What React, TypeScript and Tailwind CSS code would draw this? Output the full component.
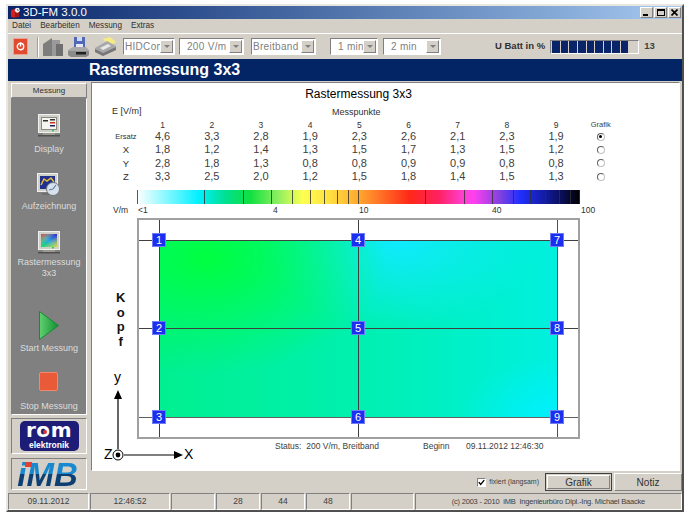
const sans = "font-['Liberation_Sans',Arial,sans-serif]"
const raised = "border border-t-white border-l-white border-r-[#808080] border-b-[#808080]"
const sunken = "border border-t-[#808080] border-l-[#808080] border-r-white border-b-white"

const columns = [1, 2, 3, 4, 5, 6, 7, 8, 9]
const rows = [
  { label: "Ersatz", small: true, values: ["4,6", "3,3", "2,8", "1,9", "2,3", "2,6", "2,1", "2,3", "1,9"], checked: true },
  { label: "X", values: ["1,8", "1,2", "1,4", "1,3", "1,5", "1,7", "1,3", "1,5", "1,2"] },
  { label: "Y", values: ["2,8", "1,8", "1,3", "0,8", "0,8", "0,9", "0,9", "0,8", "0,8"] },
  { label: "Z", values: ["3,3", "2,5", "2,0", "1,2", "1,5", "1,8", "1,4", "1,5", "1,3"] },
]

// tick positions on the colour scale, measured from its left edge
const ticks = [0, 67, 106, 134, 155, 173, 187, 200, 211, 221, 288, 327, 355, 376, 393, 408, 422, 433, 442]
const scaleLabels = [
  { text: "<1", x: 0 },
  { text: "4", x: 135 },
  { text: "10", x: 221 },
  { text: "40", x: 354 },
  { text: "100", x: 443 },
]
const markers = [
  { n: 1, x: 22, y: 22 },
  { n: 2, x: 22, y: 110 },
  { n: 3, x: 22, y: 199 },
  { n: 4, x: 221, y: 22 },
  { n: 5, x: 221, y: 110 },
  { n: 6, x: 221, y: 199 },
  { n: 7, x: 420, y: 22 },
  { n: 8, x: 420, y: 110 },
  { n: 9, x: 420, y: 199 },
]

function Combo({ label, width, clip }: { label: string; width: string; clip?: boolean }) {
  return (
    <div className={`${width} h-[17px] bg-white ${sunken} flex items-center justify-between pr-px shrink-0`}>
      <span className={`text-[10px] text-[#808080] tracking-[0.3px] overflow-hidden whitespace-nowrap ${clip ? "pl-px" : "pl-[7px]"}`}>{label}</span>
      <span className={`w-[13px] h-[13px] shrink-0 bg-[#d4d0c8] ${raised} flex items-center justify-center`}>
        <span className="w-0 h-0 border-x-[3px] border-x-transparent border-t-[3px] border-t-[#808080]" />
      </span>
    </div>
  )
}

function WinButton({ children }: { children: React.ReactNode }) {
  return (
    <div className={`w-[13px] h-[11px] bg-[#d4d0c8] ${raised} flex items-center justify-center`}>{children}</div>
  )
}

function Monitor({ children }: { children: React.ReactNode }) {
  return (
    <svg width="22" height="24" viewBox="0 0 22 24">
      <rect x="0.5" y="0.5" width="21" height="18" fill="#d0d0c8" stroke="#f0f0f0" />
      <rect x="3" y="3" width="16" height="13" fill="#8a8a80" />
      {children}
      <rect x="5" y="19" width="12" height="2" fill="#9a9a90" />
      <rect x="0" y="21" width="22" height="1.5" fill="#505050" />
      <rect x="14" y="16" width="2" height="1.5" fill="#30d060" />
    </svg>
  )
}

function NavItem({ icon, label, className }: { icon: React.ReactNode; label: React.ReactNode; className: string }) {
  return (
    <div className={`flex flex-col items-center text-[9px] leading-[11px] text-[#dcdcdc] text-center ${className}`}>
      {icon}
      {label}
    </div>
  )
}

export default function App() {
  return (
    <div className={`w-[689px] h-[516px] bg-white pt-[4px] pl-[6px] overflow-hidden ${sans}`}>
      <div className="w-[678px] h-[508px] bg-[#d4d0c8] border-2 border-t-[#e8e6e0] border-l-[#e8e6e0] border-r-[#505050] border-b-[#505050] flex flex-col">
        {/* title bar */}
        <div className="h-[13px] shrink-0 bg-gradient-to-r from-[#0a246a] to-[#a6caf0] flex items-center justify-between pr-[1px]">
          <div className="flex items-center gap-[2px] pl-[2px]">
            <svg width="11" height="12" viewBox="0 0 12 12">
              <path d="M1 3 L6 1 V11 L3 11 Q1 11 1 9 Z" fill="#d02020" />
              <path d="M6 4 H10 V10 L6 11 Z" fill="#a01818" />
              <circle cx="8" cy="3" r="2.6" fill="#ffffff" />
              <path d="M8 1.5 V3 H9.5" stroke="#202020" strokeWidth="0.7" fill="none" />
            </svg>
            <span className="text-[11.5px] leading-[13px] text-white">3D-FM 3.0.0</span>
          </div>
          <div className="flex gap-px">
            <WinButton><span className="w-[5px] h-[2px] bg-black mt-[5px] mr-[2px]" /></WinButton>
            <WinButton><span className="w-[8px] h-[7px] border border-black border-t-2" /></WinButton>
            <WinButton>
              <svg width="7" height="7" viewBox="0 0 7 7"><path d="M0.5 0.5 L6.5 6.5 M6.5 0.5 L0.5 6.5" stroke="#000" strokeWidth="1.6" /></svg>
            </WinButton>
          </div>
        </div>

        {/* menu */}
        <div className="h-[14px] shrink-0 flex items-center gap-[9px] pl-[4px] pt-px text-[8.2px] text-[#303030]">
          <span>Datei</span>
          <span>Bearbeiten</span>
          <span>Messung</span>
          <span>Extras</span>
        </div>

        {/* toolbar */}
        <div className="h-[26px] shrink-0 flex items-center border-t border-white relative">
          <div className="ml-[5px] w-[15px] h-[17px] bg-[#e24a30] border border-[#f0a090] flex items-center justify-center">
            <svg width="9" height="9" viewBox="0 0 9 9"><circle cx="4.5" cy="4.5" r="3.2" fill="none" stroke="#fff" strokeWidth="1.4" /><rect x="3.8" y="0.5" width="1.4" height="4" fill="#fff" /></svg>
          </div>
          <div className="ml-[9px] w-[2px] h-[20px] border-l border-[#a0a0a0] border-r border-r-white" />
          <svg className="ml-[3px]" width="22" height="20" viewBox="0 0 22 20">
            <path d="M1 7 L10 1 V19 H1 Z" fill="#7d7d7d" />
            <path d="M10 3 H18 V19 H10 Z" fill="#9a9a9a" />
            <path d="M14 7 H21 V19 H14 Z" fill="#6f6f6f" />
          </svg>
          <svg className="ml-[3px]" width="23" height="22" viewBox="0 0 23 22">
            <path d="M7 1 H18 V13 H7 Z" fill="#5068b8" />
            <rect x="10" y="1" width="5" height="4" fill="#d0d8f0" />
            <rect x="9" y="8" width="7" height="5" fill="#e8e8f8" />
            <path d="M1 14 L6 11 H19 L22 14 V19 L19 21 H4 L1 19 Z" fill="#a8a8a8" />
            <path d="M1 15 H22 V19 L19 21 H4 L1 19 Z" fill="#8a8a8a" />
            <rect x="9" y="16" width="10" height="2.5" fill="#202020" />
          </svg>
          <svg className="ml-[4px]" width="23" height="20" viewBox="0 0 23 20">
            <path d="M9 2 L16 0 L22 5 L15 9 Z" fill="#f4ee80" />
            <path d="M1 11 L13 4 L22 9 V13 L9 19 L1 15 Z" fill="#a8a8a8" />
            <path d="M1 12 L9 16 L22 10 V13 L9 19 L1 15 Z" fill="#777" />
            <path d="M6 11 L14 7 L17 9 L9 13 Z" fill="#e8e8e8" />
          </svg>
          <div className="ml-[6px] flex items-center">
            <Combo label="HIDCom" width="w-[52px]" clip />
            <div className="w-[4px]" />
            <Combo label="200 V/m" width="w-[65px]" />
            <div className="w-[7px]" />
            <Combo label="Breitband" width="w-[65px]" clip />
            <div className="w-[14px]" />
            <Combo label="1 min" width="w-[48px]" />
            <div className="w-[5px]" />
            <Combo label="2 min" width="w-[58px]" />
          </div>
          <span className="ml-[54px] text-[9.5px] font-bold text-[#303030] whitespace-nowrap">U Batt in %</span>
          <div className={`ml-[5px] w-[89px] h-[14px] ${sunken} flex items-center gap-px pl-px`}>
            {[0, 1, 2, 3, 4, 5, 6, 7, 8].map((i) => (
              <span key={i} className="w-[7.6px] h-[12px] bg-[#0a246a]" />
            ))}
          </div>
          <span className="ml-[5px] text-[9.5px] font-bold text-[#404040]">13</span>
        </div>

        {/* heading band */}
        <div className="h-[22px] shrink-0 bg-[#032465] flex items-center pl-[81px] text-[16px] font-bold text-white whitespace-nowrap">
          Rastermessung 3x3
        </div>

        <div className="flex-1 flex min-h-0">
          {/* left column */}
          <div className="w-[83px] shrink-0 pl-[3px] pt-[2px] flex flex-col">
            <div className={`w-[76px] h-[15px] ${raised} flex items-center justify-center text-[8px] text-[#303030]`}>Messung</div>
            <div className={`w-[76px] h-[317px] bg-[#808080] ${sunken} flex flex-col items-center`}>
              <NavItem
                className="mt-[15px]"
                icon={<Monitor>
                  <rect x="4" y="4" width="14" height="11" fill="#f4f4f0" />
                  <rect x="5" y="6" width="5" height="1.5" fill="#303030" />
                  <rect x="12" y="5" width="5" height="1.5" fill="#303030" />
                  <rect x="12" y="8" width="5" height="1.5" fill="#d03020" />
                  <rect x="12" y="11" width="5" height="1.5" fill="#202060" />
                </Monitor>}
                label={<span className="mt-[6px]">Display</span>}
              />
              <NavItem
                className="mt-[18px]"
                icon={<svg width="24" height="24" viewBox="0 0 24 24">
                  <rect x="0.5" y="0.5" width="20" height="18" fill="#d0d0c8" stroke="#f0f0f0" />
                  <rect x="3" y="3" width="15" height="13" fill="#20308c" />
                  <path d="M4 12 L7 6 L10 8 L14 5 L17 9" stroke="#e8c030" strokeWidth="1.5" fill="none" />
                  <rect x="5" y="20" width="11" height="2" fill="#707070" />
                  <circle cx="16" cy="16" r="6.5" fill="#d8e0ec" stroke="#707880" />
                  <path d="M16 16 L19 12 M16 16 L12 17" stroke="#5080b0" strokeWidth="1.2" />
                </svg>}
                label={<span className="mt-[4px]">Aufzeichnung</span>}
              />
              <NavItem
                className="mt-[19px]"
                icon={<Monitor>
                  <defs>
                    <linearGradient id="rainbowA" x1="0" y1="1" x2="1" y2="0">
                      <stop offset="0%" stopColor="#10e060" />
                      <stop offset="50%" stopColor="#20a0f0" />
                      <stop offset="100%" stopColor="#3020d0" />
                    </linearGradient>
                    <linearGradient id="rainbowB" x1="0" y1="0" x2="1" y2="1">
                      <stop offset="0%" stopColor="#f03030" stopOpacity="0.9" />
                      <stop offset="50%" stopColor="#f0f030" stopOpacity="0" />
                      <stop offset="100%" stopColor="#f0e020" stopOpacity="0.9" />
                    </linearGradient>
                  </defs>
                  <rect x="3" y="3" width="16" height="13" fill="url(#rainbowA)" />
                  <rect x="3" y="3" width="16" height="13" fill="url(#rainbowB)" />
                </Monitor>}
                label={<span className="mt-[2px]">Rastermessung<br />3x3</span>}
              />
              <NavItem
                className="mt-[31px]"
                icon={<svg width="22" height="31" viewBox="0 0 22 31">
                  <defs>
                    <linearGradient id="play" x1="0" y1="0" x2="1" y2="0">
                      <stop offset="0%" stopColor="#60d070" />
                      <stop offset="100%" stopColor="#109030" />
                    </linearGradient>
                  </defs>
                  <path d="M1.5 1.5 L20.5 15.5 L1.5 29.5 Z" fill="url(#play)" stroke="#188838" strokeLinejoin="round" />
                </svg>}
                label={<span className="mt-[2px]">Start Messung</span>}
              />
              <NavItem
                className="mt-[18px]"
                icon={<div className="w-[19px] h-[19px] rounded-[2px] bg-[#e85a38] border border-[#f08a68]" />}
                label={<span className="mt-[10px]">Stop Messung</span>}
              />
            </div>
            {/* logos */}
            <div className={`mt-[3px] w-[76px] h-[36px] ${sunken} flex items-center justify-center`}>
              <div className="relative w-[59px] h-[30px] rounded-[5px] bg-[#1d1d78] flex flex-col items-center text-white font-bold">
                <span className="font-['DejaVu_Sans',sans-serif] text-[20px] leading-[19px] tracking-[0.6px]">rom</span>
                <span className="text-[8.5px] leading-[10px]">elektronik</span>
                <span className="absolute left-[23px] top-[9px] w-[4px] h-[4px] rounded-full bg-[#e03030]" />
              </div>
            </div>
            <div className={`mt-[4px] w-[76px] h-[32px] ${sunken} flex items-center justify-center relative`}>
              <span className="text-[33px] leading-[29px] font-bold italic bg-gradient-to-b from-[#1888d0] from-50% to-[#0e3f72] to-50% bg-clip-text text-transparent pr-[3px]">iMB</span>
              <span className="absolute left-[13px] top-[3px] w-[7px] h-[5px] bg-[#e04030]" />
            </div>
          </div>

          {/* content */}
          <div className="flex-1 min-w-0 flex flex-col">
            <div className={`w-[589px] h-[389px] mt-px bg-white ${sunken} text-[#303030] relative`}>
              <div className="text-center text-[12px] leading-[14px] text-black mt-[4px] pr-[54px]">Rastermessung 3x3</div>
              <div className="relative h-[19px] text-[9px] leading-[12px]">
                <span className="absolute left-[20px] top-[4px]">E [V/m]</span>
                <span className="absolute left-[240px] top-[5px]">Messpunkte</span>
              </div>
              <div className="grid grid-cols-[46px_repeat(9,49.2px)_40px] items-center text-center">
                <span />
                {columns.map((c) => <span key={c} className="text-[8.5px] leading-[10px]">{c}</span>)}
                <span className="text-[7.5px] leading-[10px] text-[#404040]">Grafik</span>
                {rows.map((r) => [
                  <span key={r.label} className={`h-[13.3px] pl-[22px] leading-[13px] whitespace-nowrap ${r.small ? "text-[7.5px]" : "text-[9.5px]"}`}>{r.label}</span>,
                  ...r.values.map((v, i) => <span key={r.label + i} className="h-[13.3px] text-[11px] leading-[13px] text-[#404040]">{v}</span>),
                  <span key={r.label + "radio"} className="flex justify-center">
                    <span className="w-[8px] h-[8px] rounded-full border border-[#606060] border-r-[#c0c0c0] border-b-[#c0c0c0] bg-white flex items-center justify-center">
                      {r.checked && <span className="w-[3px] h-[3px] rounded-full bg-black" />}
                    </span>
                  </span>,
                ])}
              </div>

              {/* colour scale */}
              <div className="relative ml-[45px] mt-[7px] w-[443px] h-[14px] bg-[linear-gradient(to_right,#ffffff_0%,#00f0ff_14%,#00e090_20%,#10e040_25.5%,#90f060_32%,#ffff50_37.5%,#ffe040_43.5%,#ffa830_50%,#ff2818_61.6%,#ff2060_68%,#ff40d0_73.6%,#ff40f0_76%,#8040e0_82%,#2030ff_86.5%,#101890_93%,#000000_100%)]">
                {ticks.map((t) => (
                  <span key={t} className="absolute top-0 bottom-0 w-px bg-[#303030]/80" style={{ left: t }} />
                ))}
              </div>
              <div className="relative h-[14px] text-[8.5px] leading-[12px]">
                <span className="absolute left-[21px] top-0">V/m</span>
                {scaleLabels.map((l) => (
                  <span key={l.text} className="absolute top-0" style={{ left: 46 + l.x }}>{l.text}</span>
                ))}
              </div>

              {/* measurement field, a free canvas with nodes at their grid points */}
              <div className="relative ml-[45px] w-[443px] h-[221px] border-2 border-[#a0a0a0]">
                <div className="absolute left-[20px] top-[20px] w-[399px] h-[178px] bg-[radial-gradient(ellipse_45%_65%_at_12%_10%,#00ff40_0%,#00ff4000_100%),radial-gradient(ellipse_35%_50%_at_60%_0%,#10eaff_0%,#10eaff00_100%),radial-gradient(ellipse_25%_35%_at_100%_100%,#00f0ff_0%,#00f0ff00_100%),linear-gradient(to_right,#00f090_0%,#00f0b0_50%,#00f0e0_100%)]" />
                <span className="absolute left-[20px] top-0 bottom-0 w-px bg-[#404040]" />
                <span className="absolute left-[219px] top-0 bottom-0 w-px bg-[#404040]" />
                <span className="absolute left-[418px] top-0 bottom-0 w-px bg-[#505050]" />
                <span className="absolute top-[20px] left-0 right-0 h-px bg-[#404040]" />
                <span className="absolute top-[108px] left-0 right-0 h-px bg-[#404040]" />
                <span className="absolute top-[197px] left-0 right-0 h-px bg-[#606060]" />
                {markers.map((m) => (
                  <span
                    key={m.n}
                    className="absolute w-[14px] h-[14px] -ml-[9px] -mt-[9px] bg-[#1a2ff0] border border-[#6e7cf6] flex items-center justify-center text-[11px] leading-none text-white"
                    style={{ left: m.x, top: m.y }}
                  >
                    {m.n}
                  </span>
                ))}
              </div>

              <div className="flex ml-[183px] text-[8.5px] leading-[14px] text-[#404040] whitespace-nowrap">
                <span className="w-[148px]">Status:&nbsp; 200 V/m, Breitband</span>
                <span className="w-[43px]">Beginn</span>
                <span>09.11.2012 12:46:30</span>
              </div>

              {/* axis cross */}
              <div className="absolute left-[24px] top-[208px] flex flex-col items-center text-[13px] leading-[14.5px] font-bold text-[#111]">
                <span>K</span><span>o</span><span>p</span><span>f</span>
              </div>
              <svg className="absolute left-[8px] top-[303px]" width="90" height="76" viewBox="0 0 90 76">
                <path d="M18 4 L14 13 H22 Z M83 69 L74 65 V73 Z" fill="#000" />
                <path d="M18 10 V63 M24 69 H77" stroke="#000" strokeWidth="1.2" />
                <circle cx="18" cy="69" r="5" fill="#fff" stroke="#000" />
                <circle cx="18" cy="69" r="2.4" fill="#000" />
              </svg>
              <span className="absolute left-[22px] top-[287px] text-[14px] leading-none text-black">y</span>
              <span className="absolute left-[12px] top-[364px] text-[14px] leading-none text-black">Z</span>
              <span className="absolute left-[92px] top-[364px] text-[14px] leading-none text-black">X</span>
            </div>

            <div className="h-[22px] flex items-center justify-end">
              <span className={`w-[9px] h-[9px] bg-white ${sunken} flex items-center justify-center`}>
                <svg width="7" height="7" viewBox="0 0 9 9"><path d="M1 4 L3.5 7 L8 1.5" stroke="#000" strokeWidth="1.8" fill="none" /></svg>
              </span>
              <span className="ml-[3px] text-[7px] text-[#404040] whitespace-nowrap">fixiert (langsam)</span>
              <div className="ml-[6px] w-[67px] h-[18px] border border-[#404040] flex items-center justify-center text-[10px] text-[#303030]">
                <span className={`w-[63px] h-[14px] ${raised} flex items-center justify-center`}>Grafik</span>
              </div>
              <div className={`ml-[2px] w-[68px] h-[18px] ${raised} flex items-center justify-center text-[10px] text-[#303030]`}>Notiz</div>
            </div>
          </div>
        </div>

        {/* status bar */}
        <div className="h-[17px] shrink-0 flex gap-[1px] text-[8.5px] text-[#404040]">
          <div className={`w-[81px] ${sunken} flex items-center justify-center`}>09.11.2012</div>
          <div className={`w-[80px] ${sunken} flex items-center justify-center`}>12:46:52</div>
          <div className={`w-[44px] ${sunken}`} />
          <div className={`w-[44px] ${sunken} flex items-center justify-center`}>28</div>
          <div className={`w-[44px] ${sunken} flex items-center justify-center`}>44</div>
          <div className={`w-[44px] ${sunken} flex items-center justify-center`}>48</div>
          <div className={`w-[63px] ${sunken}`} />
          <div className={`flex-1 ${sunken} flex items-center justify-end pr-[36px] whitespace-nowrap text-[7.5px] tracking-[-0.2px]`}>(c) 2003 - 2010&nbsp; iMB&nbsp; Ingenieurbüro Dipl.-Ing. Michael Baacke</div>
        </div>
      </div>
    </div>
  )
}
